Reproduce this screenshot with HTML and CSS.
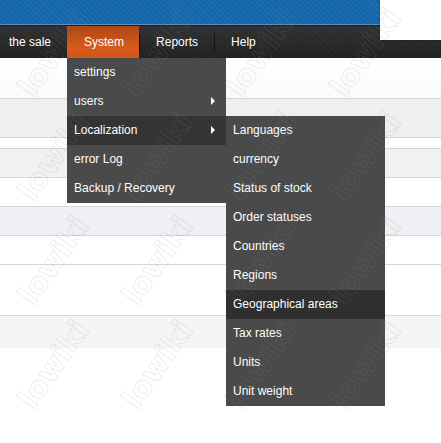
FILE: index.html
```html
<!DOCTYPE html>
<html>
<head>
<meta charset="utf-8">
<title>Admin</title>
<link rel="stylesheet" href="styles.css">
</head>
<body>
<div class="page">
  <header class="topbar"></header>
  <nav class="navbar">
    <ul class="nav">
      <li class="nav-item first">the sale</li>
      <li class="nav-item active">System
        <ul class="menu">
          <li class="menu-item">settings</li>
          <li class="menu-item">users<span class="arrow"></span></li>
          <li class="menu-item hover">Localization<span class="arrow"></span>
            <ul class="menu submenu">
              <li class="menu-item">Languages</li>
              <li class="menu-item">currency</li>
              <li class="menu-item">Status of stock</li>
              <li class="menu-item">Order statuses</li>
              <li class="menu-item">Countries</li>
              <li class="menu-item">Regions</li>
              <li class="menu-item hover">Geographical areas</li>
              <li class="menu-item">Tax rates</li>
              <li class="menu-item">Units</li>
              <li class="menu-item">Unit weight</li>
            </ul>
          </li>
          <li class="menu-item">error Log</li>
          <li class="menu-item">Backup / Recovery</li>
        </ul>
      </li>
      <li class="nav-item sep">Reports</li>
      <li class="nav-item sep">Help</li>
    </ul>
  </nav>
  <div class="login-box"></div>
  <div class="table">
    <div class="row r1"></div>
    <div class="row r2"></div>
    <div class="row r3"></div>
    <div class="row r4"></div>
    <div class="row r5"></div>
    <div class="row r6"></div>
    <div class="row r7"></div>
    <div class="row r8"></div>
    <div class="row r9"></div>
  </div>
  <div class="watermarks">
    <span class="wm">lowiki</span><span class="wm">lowiki</span><span class="wm">lowiki</span><span class="wm">lowiki</span>
    <span class="wm">lowiki</span><span class="wm">lowiki</span><span class="wm">lowiki</span><span class="wm">lowiki</span>
    <span class="wm">lowiki</span><span class="wm">lowiki</span><span class="wm">lowiki</span><span class="wm">lowiki</span>
    <span class="wm">lowiki</span><span class="wm">lowiki</span><span class="wm">lowiki</span><span class="wm">lowiki</span>
  </div>
</div>
</body>
</html>
```

FILE: styles.css
```css
html, body {
  margin: 0;
  padding: 0;
  background: #fff;
}

body {
  font-family: "Liberation Sans", Arial, sans-serif;
  font-size: 12px;
  color: #fff;
}

.page {
  position: relative;
  width: 441px;
  height: 443px;
  overflow: hidden;
}

.topbar {
  height: 24px;
  background: repeating-linear-gradient(45deg, #1a6db1 0 2px, #1565a8 2px 4px);
  border-bottom: 1px solid #5d8fbe;
}

.navbar {
  height: 32px;
  border-top: 1px solid #1d1d1d;
  background: repeating-linear-gradient(45deg, rgba(255,255,255,0.015) 0 2px, rgba(0,0,0,0.03) 2px 4px),
              linear-gradient(#313131, #222);
}

.nav {
  display: flex;
  height: 32px;
  margin: 0;
  padding: 0;
  list-style: none;
}

.nav-item {
  position: relative;
  padding: 0 16px;
  line-height: 32px;
  color: #fff;
  white-space: nowrap;
}

.nav-item.first {
  padding: 0 16px 0 9px;
}

.nav-item.active {
  padding: 0 15px 0 17px;
  background: linear-gradient(#ad4615, #d85c1b 70%, #d0571a);
}

.nav-item.sep {
  margin-left: 1px;
}

.nav-item.sep::before {
  content: "";
  position: absolute;
  left: -1px;
  top: 7px;
  width: 1px;
  height: 19px;
  background: #141414;
}

.menu {
  position: absolute;
  left: 0;
  top: 100%;
  z-index: 10;
  width: 159px;
  margin: 0;
  padding: 0;
  list-style: none;
  background: #4a4a4a;
}

.menu-item {
  position: relative;
  height: 29px;
  line-height: 29px;
  padding-left: 7px;
  color: #fff;
  white-space: nowrap;
}

.menu-item.hover {
  background: #343434;
}

.submenu {
  top: 0;
  left: 100%;
  background: #4a4a4a;
}

.submenu .menu-item.hover {
  background: #2f2f2f;
}

.arrow {
  position: absolute;
  right: 11px;
  top: 10px;
  width: 0;
  height: 0;
  border-left: 4px solid #fff;
  border-top: 4px solid transparent;
  border-bottom: 4px solid transparent;
}

.login-box {
  position: absolute;
  top: 0;
  right: 0;
  width: 61px;
  height: 40px;
  background: #fff;
  box-shadow: 0 0 2px rgba(0, 0, 0, 0.35);
  z-index: 5;
}

.table {
  display: flex;
  flex-direction: column;
}

.row {
  box-sizing: border-box;
  border-bottom: 1px solid #d6d6d6;
  background: #fff;
}

.r1 { height: 41px; background: linear-gradient(#fff, #fafafa); }
.r2 { height: 39px; background: #efefef; }
.r3 { height: 11px; }
.r4 { height: 29px; background: #f1f1f1; }
.r5 { height: 29px; }
.r6 { height: 29px; background: #efeff4; }
.r7 { height: 29px; }
.r8 { height: 51px; }
.r9 { height: 32px; background: #f5f5f5; border-bottom: none; }

.watermarks {
  position: absolute;
  left: 1px;
  top: 0;
  z-index: 30;
  display: grid;
  grid-template-columns: repeat(4, 104px);
  grid-auto-rows: 104px;
  pointer-events: none;
}

.wm {
  display: flex;
  align-items: center;
  justify-content: center;
  transform: rotate(-55deg);
  font-family: "DejaVu Sans", sans-serif;
  font-weight: bold;
  font-size: 30px;
  color: transparent;
  -webkit-text-stroke: 1px rgba(140, 140, 140, 0.17);
}
```
